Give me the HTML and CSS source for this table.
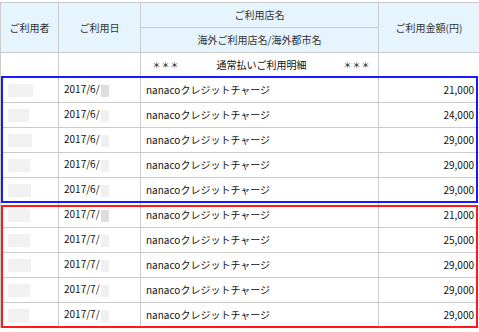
FILE: index.html
```html
<!DOCTYPE html>
<html lang="ja">
<head>
<meta charset="utf-8">
<link rel="stylesheet" href="styles.css">
</head>
<body>
<div class="wrap">
  <table class="tbl">
    <colgroup>
      <col class="c0"><col class="c1"><col class="c2"><col class="c3">
    </colgroup>
    <thead>
      <tr>
        <th rowspan="2">ご利用者</th>
        <th rowspan="2">ご利用日</th>
        <th>ご利用店名</th>
        <th rowspan="2">ご利用金額(円)</th>
      </tr>
      <tr>
        <th>海外ご利用店名/海外都市名</th>
      </tr>
    </thead>
    <tbody>
      <tr>
        <td></td>
        <td></td>
        <td><div class="section"><span class="stars">＊＊＊</span><span>通常払いご利用明細</span><span class="stars">＊＊＊</span></div></td>
        <td></td>
      </tr>
      <tr>
        <td><span class="blk" style="width:25px"></span></td>
        <td class="date">2017/6/<span class="day dk"></span></td>
        <td class="shop">nanacoクレジットチャージ</td>
        <td class="amt">21,000</td>
      </tr>
      <tr>
        <td><span class="blk" style="width:21px"></span></td>
        <td class="date">2017/6/<span class="day"></span></td>
        <td class="shop">nanacoクレジットチャージ</td>
        <td class="amt">24,000</td>
      </tr>
      <tr>
        <td><span class="blk" style="width:24px"></span></td>
        <td class="date">2017/6/<span class="day"></span></td>
        <td class="shop">nanacoクレジットチャージ</td>
        <td class="amt">29,000</td>
      </tr>
      <tr>
        <td><span class="blk" style="width:22px"></span></td>
        <td class="date">2017/6/<span class="day"></span></td>
        <td class="shop">nanacoクレジットチャージ</td>
        <td class="amt">29,000</td>
      </tr>
      <tr>
        <td><span class="blk" style="width:23px"></span></td>
        <td class="date">2017/6/<span class="day"></span></td>
        <td class="shop">nanacoクレジットチャージ</td>
        <td class="amt">29,000</td>
      </tr>
      <tr>
        <td><span class="blk" style="width:22px"></span></td>
        <td class="date">2017/7/<span class="day dk"></span></td>
        <td class="shop">nanacoクレジットチャージ</td>
        <td class="amt">21,000</td>
      </tr>
      <tr>
        <td><span class="blk" style="width:22px"></span></td>
        <td class="date">2017/7/<span class="day"></span></td>
        <td class="shop">nanacoクレジットチャージ</td>
        <td class="amt">25,000</td>
      </tr>
      <tr>
        <td><span class="blk" style="width:23px"></span></td>
        <td class="date">2017/7/<span class="day"></span></td>
        <td class="shop">nanacoクレジットチャージ</td>
        <td class="amt">29,000</td>
      </tr>
      <tr>
        <td><span class="blk" style="width:22px"></span></td>
        <td class="date">2017/7/<span class="day"></span></td>
        <td class="shop">nanacoクレジットチャージ</td>
        <td class="amt">29,000</td>
      </tr>
      <tr>
        <td><span class="blk" style="width:21px"></span></td>
        <td class="date">2017/7/<span class="day"></span></td>
        <td class="shop">nanacoクレジットチャージ</td>
        <td class="amt">29,000</td>
      </tr>
    </tbody>
  </table>
  <div class="mark mark-blue"></div>
  <div class="mark mark-red"></div>
</div>
</body>
</html>
```
FILE: styles.css
```css
html, body {
  margin: 0;
  padding: 0;
  background: #ffffff;
}
body {
  font-family: "Noto Sans CJK JP", "Noto Sans", sans-serif;
  font-size: 10px;
  color: #111;
}
.wrap {
  position: relative;
  width: 479px;
  height: 332px;
  padding-top: 2px;
  box-sizing: border-box;
  overflow: hidden;
}
.tbl {
  border-collapse: collapse;
  table-layout: fixed;
  width: 479px;
}
.c0 { width: 58px; }
.c1 { width: 82px; }
.c2 { width: 238px; }
.c3 { width: 101px; }
.tbl th, .tbl td {
  border: 1px solid #cbcbcb;
  height: 24px;
  padding: 0 5px;
  line-height: 12px;
  white-space: nowrap;
  overflow: hidden;
}
.tbl th {
  background: #e5f4fd;
  font-weight: normal;
  color: #333;
  text-align: center;
}
.section {
  display: flex;
  justify-content: center;
  align-items: center;
  gap: 37px;
  padding-left: 4px;
}
.stars {
  font-size: 8px;
  letter-spacing: 1px;
}
.date {
  padding-left: 4px;
}
.amt {
  text-align: right;
}
.blk {
  display: inline-block;
  height: 13px;
  background: #f1f1f1;
  vertical-align: middle;
  margin-left: 2px;
}
.day {
  display: inline-block;
  width: 8px;
  height: 12px;
  background: #f0f0f0;
  vertical-align: middle;
  margin-left: 1px;
}
.day.dk {
  background: #dedede;
}
.mark {
  position: absolute;
  left: 1px;
  width: 477px;
  box-sizing: border-box;
}
.mark-blue {
  top: 76px;
  height: 127px;
  border: 2px solid #1a1aff;
}
.mark-red {
  top: 205px;
  height: 123px;
  border: 2px solid #ff1a1a;
}
```
